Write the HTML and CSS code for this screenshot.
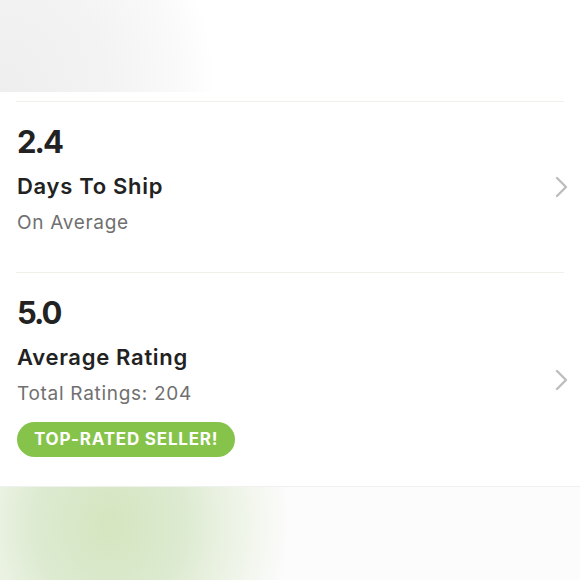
FILE: index.html
```html
<!DOCTYPE html>
<html lang="en">
<head>
<meta charset="UTF-8" />
<meta name="viewport" content="width=device-width, initial-scale=1" />
<title>Shop Stats</title>
<link rel="stylesheet" href="styles.css">
</head>
<body>
<div class="page">
    <div class="hero-fade"></div>

    <div class="stats">
        <div class="stat-row">
            <div class="stat-body">
                <div class="stat-number">2.4</div>
                <div class="stat-title">Days To Ship</div>
                <div class="stat-sub">On Average</div>
            </div>
            <svg class="chevron" width="14" height="22" viewBox="0 0 14 22">
                <path d="M2 2 L11 11 L2 20" fill="none" stroke="#bdbdbd" stroke-width="2.4" stroke-linecap="round" stroke-linejoin="round"/>
            </svg>
        </div>

        <div class="stat-row last">
            <div class="stat-body">
                <div class="stat-number">5.0</div>
                <div class="stat-title">Average Rating</div>
                <div class="stat-sub">Total Ratings: 204</div>
                <div class="badge">TOP-RATED SELLER!</div>
            </div>
            <svg class="chevron" width="14" height="22" viewBox="0 0 14 22">
                <path d="M2 2 L11 11 L2 20" fill="none" stroke="#bdbdbd" stroke-width="2.4" stroke-linecap="round" stroke-linejoin="round"/>
            </svg>
        </div>
    </div>

    <div class="foot-fade"></div>
</div>
</body>
</html>
```

FILE: styles.css
```css
* {
    box-sizing: border-box;
}
body, html {
    margin: 0;
    height: 100%;
    background: #fff;
    font-family: Inter, "Open Sans", Arial, sans-serif;
}
.page {
    display: flex;
    flex-direction: column;
    height: 580px;
    overflow: hidden;
}
.hero-fade {
    height: 92px;
    flex-shrink: 0;
    background: radial-gradient(215px 240px at 0 100%, #eeeeee 0%, #f3f3f3 50%, #fafafa 85%, #fff 100%);
}
.stats {
    padding: 9px 16px 0;
}
.stat-row {
    display: flex;
    align-items: center;
    border-top: 1px solid #f0f0ea;
}
.stat-body {
    flex: 1;
    padding: 20px 0 37px 1px;
}
.stat-row.last .stat-body {
    padding-bottom: 29px;
}
.stat-number {
    font-size: 31px;
    line-height: 40px;
    font-weight: 700;
    letter-spacing: -2px;
    color: #222;
}
.stat-title {
    margin-top: 10px;
    font-size: 22px;
    line-height: 28px;
    font-weight: 600;
    letter-spacing: 0.7px;
    color: #222;
}
.stat-sub {
    margin-top: 11px;
    font-size: 19px;
    line-height: 24px;
    letter-spacing: 0.7px;
    color: #707070;
}
.badge {
    width: max-content;
    margin-top: 16px;
    padding: 0 17px;
    height: 35px;
    line-height: 35px;
    border-radius: 18px;
    background: #86c34a;
    color: #fff;
    font-size: 17px;
    font-weight: 700;
    letter-spacing: 0.8px;
}
.chevron {
    margin-right: -5px;
    flex-shrink: 0;
}
.foot-fade {
    flex: 1;
    border-top: 1px solid #f0f0f0;
    background: radial-gradient(180px 210px at 110px 40%, #d5e5bf 0%, #dcead0 40%, #ebf2e3 65%, #fcfcfc 100%) #fcfcfc;
}
```
